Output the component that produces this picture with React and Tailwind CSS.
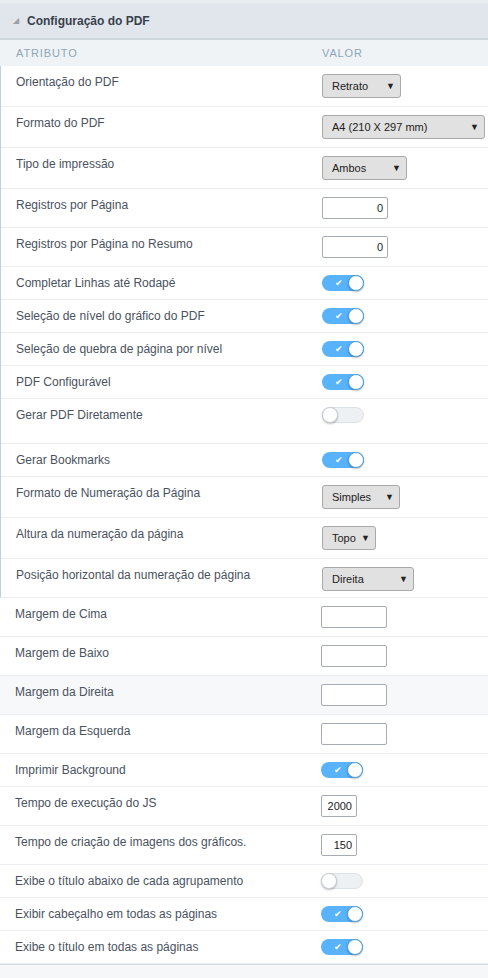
import React from 'react';

const upper = [
  { label: 'Orientação do PDF', type: 'select', value: 'Retrato', w: 'w-[79px]' },
  { label: 'Formato do PDF', type: 'select', value: 'A4 (210 X 297 mm)', w: 'w-[163px]' },
  { label: 'Tipo de impressão', type: 'select', value: 'Ambos', w: 'w-[85px]' },
  { label: 'Registros por Página', type: 'input', value: '0', w: 'w-[66px]' },
  { label: 'Registros por Página no Resumo', type: 'input', value: '0', w: 'w-[66px]' },
  { label: 'Completar Linhas até Rodapé', type: 'toggle', on: true },
  { label: 'Seleção de nível do gráfico do PDF', type: 'toggle', on: true },
  { label: 'Seleção de quebra de página por nível', type: 'toggle', on: true },
  { label: 'PDF Configurável', type: 'toggle', on: true },
  { label: 'Gerar PDF Diretamente', type: 'toggle', on: false, tall: true },
  { label: 'Gerar Bookmarks', type: 'toggle', on: true },
  { label: 'Formato de Numeração da Página', type: 'select', value: 'Simples', w: 'w-[78px]' },
  { label: 'Altura da numeração da página', type: 'select', value: 'Topo', w: 'w-[54px]' },
  { label: 'Posição horizontal da numeração de página', type: 'select', value: 'Direita', w: 'w-[92px]', last: true },
];

const lower = [
  { label: 'Margem de Cima', type: 'input', value: '', w: 'w-[66px]' },
  { label: 'Margem de Baixo', type: 'input', value: '', w: 'w-[66px]' },
  { label: 'Margem da Direita', type: 'input', value: '', w: 'w-[66px]', hover: true },
  { label: 'Margem da Esquerda', type: 'input', value: '', w: 'w-[66px]' },
  { label: 'Imprimir Background', type: 'toggle', on: true },
  { label: 'Tempo de execução do JS', type: 'input', value: '2000', w: 'w-[36px]' },
  { label: 'Tempo de criação de imagens dos gráficos.', type: 'input', value: '150', w: 'w-[36px]' },
  { label: 'Exibe o título abaixo de cada agrupamento', type: 'toggle', on: false },
  { label: 'Exibir cabeçalho em todas as páginas', type: 'toggle', on: true },
  { label: 'Exibe o título em todas as páginas', type: 'toggle', on: true },
];

function Select({ value, w }) {
  return (
    <div className={`${w} h-[24px] flex items-center justify-between pl-[9px] pr-[5px] bg-[#e1e1e1] border border-[#a9a9a9] rounded-[3px] text-[11px] text-[#222]`}>
      <span>{value}</span>
      <span className="text-[9px] leading-none">▼</span>
    </div>
  );
}

function Input({ value, w }) {
  return (
    <div className={`${w} h-[22px] flex items-center justify-end pr-[4px] bg-white border border-[#a7abb3] rounded-[2px] text-[11px] text-[#222]`}>
      {value}
    </div>
  );
}

function Toggle({ on }) {
  if (on) {
    return (
      <div className="relative w-[42px] h-[16px] rounded-full bg-[#58b3fa]">
        <span className="absolute left-[13px] top-[1px] text-[9px] leading-[14px] text-white">✔</span>
        <span className="absolute right-0 top-0 w-[16px] h-[16px] rounded-full bg-white border border-[#4f9ee0] shadow-[0_1px_2px_rgba(0,0,0,0.25)]"></span>
      </div>
    );
  }
  return (
    <div className="relative w-[42px] h-[16px] rounded-full bg-[#eef1f4] border border-[#dde2e8]">
      <span className="absolute left-[-1px] top-[-1px] w-[16px] h-[16px] rounded-full bg-white border border-[#c9ced4] shadow-[0_1px_2px_rgba(0,0,0,0.25)]"></span>
    </div>
  );
}

function Row({ r }) {
  const pad = r.tall ? 'pt-2 pb-[20px]' : r.last ? 'pt-2 pb-[6px]' : 'py-2';
  return (
    <div className={`flex ${pad} ${r.last ? '' : 'border-b border-[#eceef1]'} ${r.hover ? 'bg-[#f7f8fa]' : ''}`}>
      <div className="w-[321px] shrink-0 pl-[15px] text-[12px] leading-4 text-[#4a5260]">{r.label}</div>
      <div className="flex-1">
        {r.type === 'select' && <Select value={r.value} w={r.w} />}
        {r.type === 'input' && <Input value={r.value} w={r.w} />}
        {r.type === 'toggle' && <Toggle on={r.on} />}
      </div>
    </div>
  );
}

export default function App() {
  return (
    <div className="w-[488px] min-h-[978px] bg-white font-['Liberation_Sans',Arial,sans-serif] flex flex-col">
      <div className="h-[40px] bg-[#e1e6ec] border-t-[3px] border-t-[#e9ecf0] border-b-2 border-b-[#cfd6de] flex items-center pl-[13px] gap-[8px]">
        <span className="text-[8px] text-[#9aa0a6] leading-none">◢</span>
        <span className="text-[12px] font-bold text-[#38414d]">Configuração do PDF</span>
      </div>
      <div className="h-[26px] bg-[#eff3f6] flex items-center text-[11px] tracking-[0.08em] text-[#8ea6b6]">
        <div className="w-[322px] pl-4">ATRIBUTO</div>
        <div>VALOR</div>
      </div>
      <div className="border-l border-l-[#c3cfda] border-b border-b-[#eceef1]">
        {upper.map((r) => <Row key={r.label} r={r} />)}
      </div>
      <div>
        {lower.map((r) => <Row key={r.label} r={r} />)}
      </div>
      <div className="flex-1 bg-[#f5f7f9] border-t border-t-[#d6dce2]"></div>
    </div>
  );
}
